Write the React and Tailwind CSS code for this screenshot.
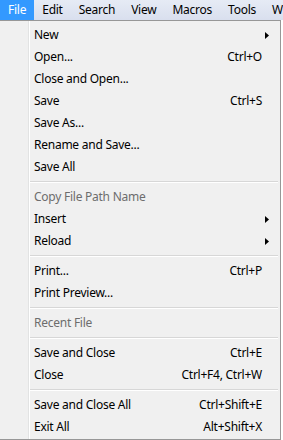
import React from "react";

const menuBar = ["File", "Edit", "Search", "View", "Macros", "Tools", "Window"];

// each entry: label, shortcut, flags
const items = [
  { label: "New", sub: true },
  { label: "Open...", key: "Ctrl+O" },
  { label: "Close and Open..." },
  { label: "Save", key: "Ctrl+S" },
  { label: "Save As..." },
  { label: "Rename and Save..." },
  { label: "Save All" },
  { sep: true },
  { label: "Copy File Path Name", disabled: true },
  { label: "Insert", sub: true },
  { label: "Reload", sub: true },
  { sep: true },
  { label: "Print...", key: "Ctrl+P" },
  { label: "Print Preview..." },
  { sep: true },
  { label: "Recent File", disabled: true },
  { sep: true },
  { label: "Save and Close", key: "Ctrl+E" },
  { label: "Close", key: "Ctrl+F4, Ctrl+W" },
  { sep: true },
  { label: "Save and Close All", key: "Ctrl+Shift+E" },
  { label: "Exit All", key: "Alt+Shift+X" },
];

const Arrow = () => (
  <svg width="4" height="7" viewBox="0 0 4 7" className="absolute right-[11px] top-[8px]">
    <path d="M0 0 L4 3.5 L0 7 Z" fill="#000" />
  </svg>
);

export default function App() {
  return (
    <div
      className="w-[283px] h-[440px] bg-white overflow-hidden text-[12px] leading-none tracking-[-0.25px]"
      style={{ fontFamily: '"Segoe UI", "Noto Sans", "Open Sans", sans-serif' }}
    >
      {/* menu bar */}
      <div className="h-[20px] flex bg-gradient-to-b from-[#e6ebf5] to-[#d9dfee] whitespace-nowrap overflow-hidden">
        {menuBar.map((m, i) => (
          <div
            key={m}
            className={
              i === 0
                ? "h-full px-[8px] flex items-center bg-[#3399ff] text-white"
                : "h-full px-[8px] flex items-center text-black"
            }
          >
            {m}
          </div>
        ))}
      </div>

      {/* dropdown */}
      <div className="relative w-[281px] h-[420px] bg-[#f0f0f0] border-t border-r border-b border-[#979797] pt-[3px]">
        <div className="absolute left-[28px] top-0 bottom-0 w-[2px] border-l border-[#e2e3e3] border-r-white border-r" />
        {items.map((it, i) =>
          it.sep ? (
            <div key={i} className="h-[8px] flex items-center pl-[30px] pr-[2px]">
              <div className="w-full h-[2px] border-t border-[#d7d7d7] border-b border-b-white" />
            </div>
          ) : (
            <div
              key={i}
              className={
                "relative h-[22px] flex items-center justify-between pl-[34px] pr-[18px] " +
                (it.disabled ? "text-[#6d6d6d]" : "text-black")
              }
            >
              <span>{it.label}</span>
              {it.key && <span>{it.key}</span>}
              {it.sub && <Arrow />}
            </div>
          )
        )}
      </div>
    </div>
  );
}
